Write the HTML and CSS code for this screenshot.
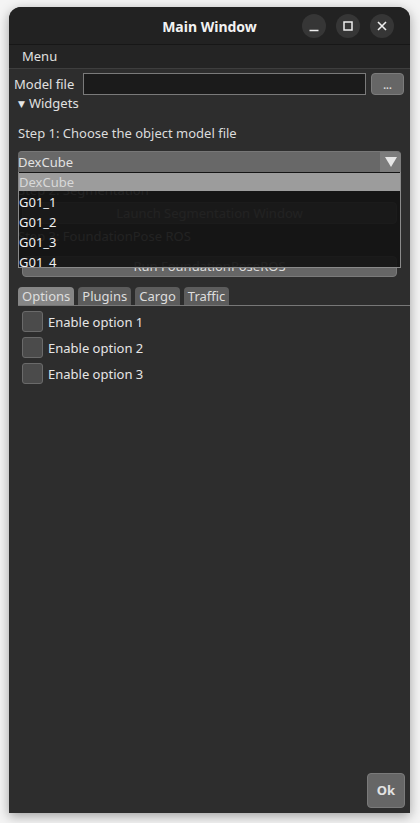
FILE: index.html
```html
<!DOCTYPE html>
<html>
<head>
<meta charset="utf-8">
<link rel="stylesheet" href="styles.css">
</head>
<body>
<div class="window">
  <div class="titlebar">
    <div class="tb-side"></div>
    <div class="title">Main Window</div>
    <div class="tb-controls">
      <span class="tb-btn"><svg width="24" height="24" viewBox="0 0 24 24"><path d="M7.5 16.5h9" stroke="#eee" stroke-width="1.6" fill="none"/></svg></span>
      <span class="tb-btn"><svg width="24" height="24" viewBox="0 0 24 24"><rect x="8" y="8" width="8" height="8" stroke="#eee" stroke-width="1.5" fill="none"/></svg></span>
      <span class="tb-btn"><svg width="24" height="24" viewBox="0 0 24 24"><path d="M8 8l8 8M16 8l-8 8" stroke="#eee" stroke-width="1.6" fill="none"/></svg></span>
    </div>
  </div>
  <div class="menubar">Menu</div>
  <div class="content">
    <div class="file-row">
      <span class="file-label">Model file</span>
      <div class="file-input"></div>
      <div class="file-btn">...</div>
    </div>
    <div class="widgets-toggle"><span class="tri">&#9660;</span>Widgets</div>
    <div class="group">
      <div class="step step1">Step 1: Choose the object model file</div>
      <div class="combo-wrap">
        <div class="combo">
          <span class="combo-text">DexCube</span>
          <span class="combo-arrow"><svg width="14" height="12" viewBox="0 0 14 12"><path d="M1 1h12L7 11z" fill="#e6e6e6"/></svg></span>
        </div>
        <div class="popup">
          <div class="item sel">DexCube</div>
          <div class="item">G01_1</div>
          <div class="item">G01_2</div>
          <div class="item">G01_3</div>
          <div class="item">G01_4</div>
        </div>
      </div>
      <div class="step step2">Step 2: Segmentation</div>
      <div class="btn launch">Launch Segmentation Window</div>
      <div class="step step3">Step 3: FoundationPose ROS</div>
      <div class="btn run">Run FoundationPoseROS</div>
      <div class="tabs">
        <div class="tab active">Options</div>
        <div class="tab">Plugins</div>
        <div class="tab">Cargo</div>
        <div class="tab">Traffic</div>
      </div>
      <div class="options">
        <div class="opt"><span class="check"></span>Enable option 1</div>
        <div class="opt"><span class="check"></span>Enable option 2</div>
        <div class="opt"><span class="check"></span>Enable option 3</div>
      </div>
    </div>
    <div class="spacer"></div>
    <div class="ok">Ok</div>
  </div>
</div>
</body>
</html>
```

FILE: styles.css
```css
html, body {
  margin: 0;
  padding: 0;
}
body {
  background: #f4f4f4;
  font-family: "Noto Sans", "DejaVu Sans", sans-serif;
  font-size: 13px;
  color: #dcdcdc;
  height: 823px;
  overflow: hidden;
}
.window {
  margin: 7px 0 0 9px;
  width: 401px;
  height: 806px;
  border-radius: 12px 12px 0 0;
  background: #2d2d2d;
  box-shadow: 0 3px 12px rgba(0, 0, 0, 0.35);
  display: flex;
  flex-direction: column;
  overflow: hidden;
}
.titlebar {
  height: 37px;
  flex: none;
  background: #222222;
  border-bottom: 1px solid #171717;
  display: grid;
  grid-template-columns: 1fr auto 1fr;
  align-items: center;
}
.title {
  font-weight: bold;
  font-size: 14px;
  color: #f2f2f2;
  padding-top: 1px;
}
.tb-controls {
  display: flex;
  justify-content: flex-end;
  gap: 10px;
  padding-right: 16px;
}
.tb-btn {
  width: 24px;
  height: 24px;
  border-radius: 50%;
  background: #363636;
  display: block;
}
.tb-btn svg {
  display: block;
}
.menubar {
  height: 23px;
  flex: none;
  line-height: 23px;
  background: #242424;
  border-bottom: 1px solid #3e3e3e;
  padding-left: 13px;
  color: #e0e0e0;
}
.content {
  flex: 1;
  display: flex;
  flex-direction: column;
  padding: 4px 6px 5px 5px;
}
.file-row {
  display: flex;
  align-items: center;
  height: 22px;
}
.file-label {
  width: 61px;
  margin-right: 8px;
  color: #e0e0e0;
  white-space: nowrap;
}
.file-input {
  width: 283px;
  height: 22px;
  box-sizing: border-box;
  border: 1px solid #7a7a7a;
  background: #1b1b1b;
}
.file-btn {
  margin-left: 5px;
  width: 33px;
  height: 22px;
  box-sizing: border-box;
  background: #666666;
  border: 1px solid #7c7c7c;
  border-radius: 4px;
  color: #dddddd;
  font-size: 10px;
  text-align: center;
  line-height: 22px;
  font-weight: bold;
}
.widgets-toggle {
  height: 17px;
  line-height: 17px;
  padding-left: 4px;
  color: #e0e0e0;
  display: flex;
  align-items: center;
}
.tri {
  font-size: 9px;
  margin-right: 4px;
  color: #e6e6e6;
}
.group {
  display: flex;
  flex-direction: column;
  padding: 0 3px 0 4px;
}
.step {
  height: 18px;
  line-height: 18px;
  color: #dcdcdc;
}
.step1 {
  margin-top: 12px;
}
.combo-wrap {
  position: relative;
  margin-top: 9px;
  z-index: 2;
}
.combo {
  height: 21px;
  box-sizing: border-box;
  display: flex;
  background: #686868;
  border-top: 1px solid #777;
  border-radius: 4px 4px 0 0;
  overflow: hidden;
}
.combo-text {
  flex: 1;
  line-height: 20px;
  color: #e2e2e2;
}
.combo-arrow {
  width: 21px;
  background: #7c7c7c;
  display: flex;
  align-items: center;
  justify-content: center;
}
.popup {
  position: absolute;
  left: 0;
  right: 0;
  top: 100%;
  height: 96px;
  box-sizing: border-box;
  background: rgba(19, 19, 19, 0.93);
  border: 1px solid #8a8a8a;
  border-top: none;
  overflow: hidden;
}
.item {
  height: 20px;
  line-height: 20px;
  color: #f0f0f0;
  padding-left: 0;
}
.item.sel {
  height: 18px;
  line-height: 18px;
  margin-top: 1px;
  margin-bottom: 1px;
  background: #9c9c9c;
  color: #d8d8d8;
}
.step2 {
  margin-top: 9px;
}
.btn {
  margin: 0 4px;
  box-sizing: border-box;
  background: #666666;
  border: 1px solid #7a7a7a;
  border-radius: 4px;
  text-align: center;
  color: #dddddd;
}
.launch {
  margin-top: 3px;
  height: 22px;
  line-height: 20px;
}
.step3 {
  margin-top: 3px;
}
.run {
  margin-top: 11px;
  height: 21px;
  line-height: 19px;
}
.tabs {
  margin-top: 10px;
  margin-right: -9px;
  display: flex;
  gap: 4px;
  border-bottom: 1px solid #777;
}
.tab {
  height: 18px;
  line-height: 18px;
  padding: 0 4px;
  background: #5c5c5c;
  border-radius: 4px 4px 0 0;
  color: #dedede;
}
.tab.active {
  background: #868686;
}
.options {
  display: flex;
  flex-direction: column;
  gap: 5px;
  margin-top: 5px;
}
.opt {
  display: flex;
  align-items: center;
  height: 21px;
  padding-left: 4px;
  color: #e6e6e6;
}
.check {
  width: 21px;
  height: 21px;
  box-sizing: border-box;
  background: #4b4b4b;
  border: 1px solid #6a6a6a;
  border-radius: 3px;
  margin-right: 5px;
}
.spacer {
  flex: 1;
}
.ok {
  align-self: flex-end;
  margin-right: -1px;
  width: 38px;
  height: 35px;
  box-sizing: border-box;
  background: #666666;
  border: 1px solid #7a7a7a;
  border-radius: 4px;
  text-align: center;
  line-height: 33px;
  color: #e2e2e2;
  font-weight: bold;
}
```
